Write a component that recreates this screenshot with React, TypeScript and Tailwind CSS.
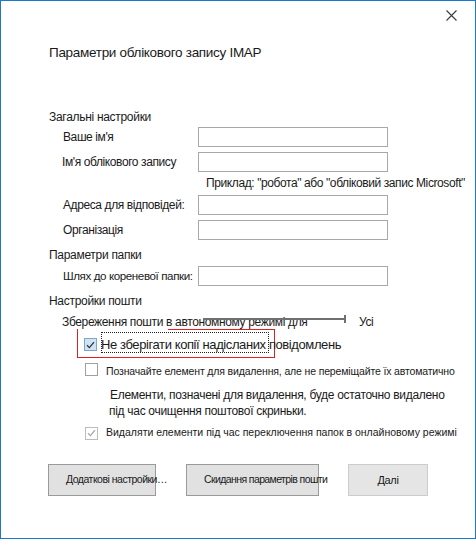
import React from 'react';

const font = { fontFamily: '"Liberation Sans", Arial, sans-serif' };

function Field({ label, indent = false, tight = false }: { label: string; indent?: boolean; tight?: boolean }) {
  return (
    <div className="flex h-[20px] items-center">
      <div
        className={`w-[149px] whitespace-nowrap text-[#1a1a1a] ${tight ? 'text-[11.6px] tracking-[-0.4px]' : 'text-[12px] tracking-[-0.4px]'} ${
          indent ? 'pl-[14px]' : 'pl-[13px]'
        }`}
      >
        {label}
      </div>
      <div className="h-[20px] w-[190px] border border-[#a8a8a8] bg-white" />
    </div>
  );
}

function Check({ checked, variant }: { checked: boolean; variant: 'focus' | 'normal' | 'disabled' }) {
  const box =
    variant === 'focus'
      ? 'border-[#7ea7cc] bg-[#cfe3f5]'
      : variant === 'disabled'
      ? 'border-[#bcbcbc] bg-white'
      : 'border-[#a0a0a0] bg-white';
  const stroke = variant === 'disabled' ? '#a8a8a8' : '#333333';
  return (
    <div className={`flex h-[13px] w-[13px] shrink-0 items-center justify-center border ${box}`}>
      {checked && (
        <svg width="9" height="8" viewBox="0 0 9 8">
          <path d="M1 4.2 L3.4 6.6 L8 1.2" fill="none" stroke={stroke} strokeWidth="1.3" />
        </svg>
      )}
    </div>
  );
}

export default function App() {
  return (
    <div className="h-[539px] w-[476px] bg-white" style={font}>
      <div className="flex h-[539px] w-[476px] flex-col border border-[#1979ca] bg-white text-[#1a1a1a]">
        {/* title bar */}
        <div className="flex h-[29px] items-center justify-end pr-[18px]">
          <svg width="11" height="11" viewBox="0 0 11 11">
            <path d="M0.5 0.5 L10.5 10.5 M10.5 0.5 L0.5 10.5" stroke="#3a3a3a" strokeWidth="1.1" />
          </svg>
        </div>

        <div className="pl-[48px]">
          <div className="mt-[13px] flex h-[20px] items-center whitespace-nowrap text-[13.5px] tracking-[-0.3px]">
            Параметри облікового запису IMAP
          </div>

          {/* general */}
          <div className="mt-[46px] flex h-[16px] items-center text-[12px] tracking-[-0.3px]">Загальні настройки</div>
          <div className="mt-[2px]">
            <Field label="Ваше ім'я" indent />
          </div>
          <div className="mt-[5px]">
            <Field label="Ім'я облікового запису" />
          </div>
          <div className="mt-[3px] flex h-[16px] items-center whitespace-nowrap pl-[157px] text-[12px] tracking-[-0.4px]">
            Приклад: "робота" або "обліковий запис Microsoft"
          </div>
          <div className="mt-[4px]">
            <Field label="Адреса для відповідей:" indent />
          </div>
          <div className="mt-[5px]">
            <Field label="Організація" indent />
          </div>

          {/* folder */}
          <div className="mt-[7px] flex h-[16px] items-center text-[12px] tracking-[-0.3px]">Параметри папки</div>
          <div className="mt-[3px]">
            <Field label="Шлях до кореневої папки:" indent tight />
          </div>

          {/* mail */}
          <div className="mt-[7px] flex h-[16px] items-center text-[12px] tracking-[-0.3px]">Настройки пошти</div>
          <div className="relative mt-[5px] flex h-[16px] items-center whitespace-nowrap pl-[13px] text-[12px] tracking-[-0.35px]">
            <span className="w-[297px]">Збереження пошти в автономному режимі для</span>
            <span>Усі</span>
            <div className="absolute left-[154px] top-[4px] h-[2px] w-[143px] bg-[#707070]" />
            <div className="absolute left-[295px] top-[1px] h-[8px] w-[2px] bg-[#707070]" />
          </div>

          <div className="relative ml-[28px] mt-[-1px] h-[29px] w-[198px] border-x border-b border-[#e02020]">
            <div className="absolute left-[90px] right-[-1px] top-0 h-px bg-[#e02020]" />
            <div className="flex h-full items-center gap-[4px] pl-[6px] pt-[3px]">
              <Check checked variant="focus" />
              <div className="relative whitespace-nowrap text-[13px] tracking-[-0.4px]">
                Не зберігати копії надісланих повідомлень
                <div className="absolute left-0 top-[-3px] h-[21px] w-[168px] border border-dotted border-[#222]" />
              </div>
            </div>
          </div>

          <div className="mt-[3px] flex h-[16px] items-center gap-[8px] pl-[36px]">
            <Check checked={false} variant="normal" />
            <span className="whitespace-nowrap pt-[5px] text-[10.5px] tracking-[-0.15px]">
              Позначайте елемент для видалення, але не переміщайте їх автоматично
            </span>
          </div>

          <div className="mt-[10px] whitespace-nowrap pl-[61px] text-[12px] leading-[16px] tracking-[-0.3px]">
            <div>Елементи, позначені для видалення, буде остаточно видалено</div>
            <div className="-ml-[1px]">під час очищення поштової скриньки.</div>
          </div>

          <div className="mt-[6px] flex h-[16px] items-center gap-[8px] pl-[36px]">
            <Check checked variant="disabled" />
            <span className="whitespace-nowrap text-[10.5px]">
              Видаляти елементи під час переключення папок в онлайновому режимі
            </span>
          </div>
        </div>

        {/* buttons */}
        <div className="mt-[23px] flex h-[32px] pl-[47px]">
          <div className="flex h-[32px] w-[108px] items-center whitespace-nowrap border border-[#9a9a9a] bg-[#e1e1e1] pl-[17px] text-[10.5px] tracking-[-0.5px]">
            Додаткові настройки…
          </div>
          <div className="ml-[30px] flex h-[32px] w-[133px] items-center whitespace-nowrap border border-[#9a9a9a] bg-[#e1e1e1] pl-[17px] text-[10.5px] tracking-[-0.6px]">
            Скидання параметрів пошти
          </div>
          <div className="ml-[29px] flex h-[32px] w-[80px] items-center justify-center border border-[#cccccc] bg-[#e5e5e5] text-[11px] tracking-[-0.3px]">
            Далі
          </div>
        </div>
      </div>
    </div>
  );
}
